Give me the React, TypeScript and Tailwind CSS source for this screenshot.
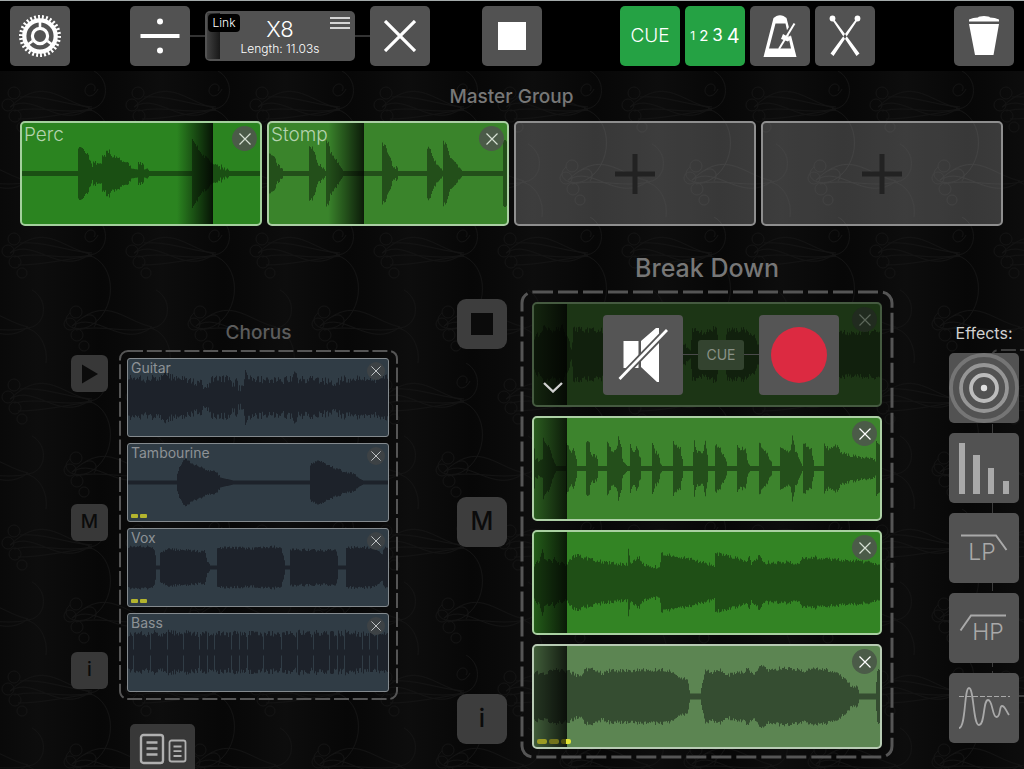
import type { ReactNode } from "react";

type Point = [number, number];

const FLAT = 2.5;

/** Turns envelope points into a mirrored, slightly ragged wave outline. */
function wavePath(points: Point[], width: number, noise: number): string {
  let seed = 7 + width;
  const random = () => {
    seed = (seed * 16807) % 2147483647;
    return seed / 2147483647;
  };
  const tops: string[] = [];
  const bottoms: string[] = [];
  let i = 0;
  for (let x = 0; x < width; x += 1) {
    while (i < points.length - 2 && points[i + 1][0] <= x) i += 1;
    const [x0, y0] = points[i];
    const [x1, y1] = points[i + 1];
    const t = x1 === x0 ? 1 : Math.min(1, Math.max(0, (x - x0) / (x1 - x0)));
    const base = y0 + (y1 - y0) * t;
    const wobble = base > 6 ? (random() - 0.5) * noise : 0;
    const amp = Math.max(1.5, base + wobble);
    tops.push(`L${x} ${(-amp).toFixed(1)}L${x + 1} ${(-amp).toFixed(1)}`);
    bottoms.unshift(`L${x + 1} ${amp.toFixed(1)}L${x} ${amp.toFixed(1)}`);
  }
  return `M0 0${tops.join("")}${bottoms.join("")}Z`;
}

const percWave: Point[] = [[0, FLAT], [55, FLAT], [56, 27], [58, 28], [66, 17], [70, 8], [71, 11], [73, 11], [74, 7], [75, 11], [78, 11], [79, 8], [80, 19], [83, 18], [84, 21], [87, 23], [89, 17], [98, 15], [100, 11], [108, 9], [109, 5], [115, 4], [116, 12], [121, 8], [122, 4], [125, 5], [127, FLAT], [169, FLAT], [170, 33], [175, 27], [181, 18], [188, 12], [191, 8], [197, 8], [198, 4], [199, 8], [201, 4], [202, 6], [203, 3], [205, 5], [207, FLAT], [238, FLAT]];
const stompWave: Point[] = [[0, 22], [6, 15], [8, 8], [13, 5], [14, FLAT], [39, FLAT], [40, 27], [43, 26], [46, 17], [49, 9], [54, 6], [56, FLAT], [57, 33], [59, 30], [61, 22], [66, 14], [73, 4], [74, FLAT], [112, FLAT], [113, 30], [116, 28], [118, 20], [121, 14], [124, 7], [128, 6], [129, FLAT], [157, FLAT], [158, 26], [161, 23], [163, 17], [166, 12], [171, 7], [173, 3], [174, 32], [177, 28], [180, 18], [184, 12], [191, 5], [193, FLAT], [233, FLAT], [234, 33], [238, 31]];
const guitarWave: Point[] = [[0, 22], [3, 20], [20, 18], [37, 22], [42, 20], [60, 17], [70, 15], [78, 11], [84, 19], [98, 19], [106, 13], [109, 20], [110, 10], [115, 9], [117, 25], [119, 20], [135, 18], [150, 17], [163, 18], [166, 23], [170, 18], [195, 17], [207, 13], [215, 20], [222, 17], [228, 20], [236, 20], [245, 17], [252, 22], [260, 20]];
const tambourineWave: Point[] = [[0, 2], [48, 2], [49, 10], [51, 15], [55, 22], [57, 24], [62, 20], [75, 14], [88, 10], [92, 5], [105, 2], [181, 2], [182, 18], [190, 22], [200, 17], [215, 11], [225, 9], [231, 4], [235, 2], [260, 2]];
const voxWave: Point[] = [[0, 21], [22, 21], [26, 17], [27, 12], [28, 2], [31, 2], [32, 16], [40, 18], [60, 17], [76, 16], [79, 7], [82, 2], [88, 2], [89, 20], [100, 20], [125, 19], [145, 21], [153, 19], [155, 12], [157, 2], [161, 2], [162, 18], [190, 17], [207, 17], [209, 13], [210, 2], [217, 2], [218, 20], [230, 20], [245, 20], [254, 14], [256, 20], [260, 21]];
const bassGaps = [5, 22, 39, 55, 71, 79, 86, 103, 111, 119, 135, 153, 169, 185, 201, 209, 216, 234, 241, 249];
const bassWave: Point[] = [
  [0, 19],
  ...bassGaps.flatMap((x): Point[] => [[x - 1, 18], [x, 3], [x + 1, 20]]),
  [260, 20],
];
const breakWave: Point[] = [[0, 18], [8, 22], [10, 30], [16, 22], [28, 28], [34, 14], [37, 5], [39, 25], [65, 24], [110, 25], [147, 18], [150, 10], [156, 4], [158, 25], [170, 22], [182, 27], [184, 10], [190, 5], [193, 24], [210, 25], [220, 18], [224, 8], [228, 22], [260, 23], [310, 22], [346, 22]];
const beatWave: Point[] = [[0, 22], [1, 9], [8, 8], [9, 29], [14, 22], [20, 6], [22, FLAT], [31, FLAT], [32, 26], [36, 17], [39, 19], [42, 10], [43, FLAT], [51, FLAT], [52, 28], [55, 25], [56, 15], [63, 11], [64, FLAT], [72, FLAT], [73, 25], [77, 18], [82, 18], [84, 31], [87, 20], [88, 8], [93, FLAT], [95, FLAT], [96, 25], [99, 16], [103, 22], [106, 10], [107, FLAT], [117, FLAT], [118, 25], [121, 17], [124, 14], [126, 5], [128, FLAT], [138, FLAT], [139, 26], [146, 20], [149, FLAT], [158, FLAT], [160, 29], [162, 17], [169, 17], [171, 29], [173, 12], [174, FLAT], [180, FLAT], [181, 24], [186, 19], [192, 8], [193, FLAT], [202, FLAT], [203, 24], [206, 20], [211, 20], [214, 5], [216, FLAT], [224, FLAT], [225, 25], [231, 18], [237, 7], [238, FLAT], [245, FLAT], [246, 22], [256, 17], [258, 33], [261, 18], [267, 5], [268, FLAT], [269, 26], [277, 19], [280, FLAT], [289, FLAT], [290, 25], [294, 19], [302, 23], [307, 15], [322, 12], [341, 9], [342, 26], [346, 22]];
const riffWave: Point[] = [[0, 18], [5, 22], [8, 32], [10, 24], [18, 20], [20, 26], [22, 20], [30, 19], [33, 17], [36, 24], [42, 27], [60, 22], [80, 19], [93, 18], [94, 33], [96, 20], [105, 25], [108, 18], [125, 15], [127, 29], [150, 25], [170, 20], [180, 16], [181, 29], [200, 25], [213, 21], [215, 26], [217, 18], [225, 27], [229, 20], [240, 20], [255, 20], [264, 18], [268, 25], [280, 25], [300, 23], [320, 22], [346, 18]];
const swellWave: Point[] = [[0, 25], [10, 22], [20, 27], [35, 25], [46, 19], [50, 27], [60, 27], [68, 23], [75, 26], [100, 26], [128, 27], [138, 25], [145, 20], [153, 17], [156, 3], [166, 3], [168, 12], [171, 27], [178, 24], [185, 27], [192, 21], [210, 25], [213, 28], [219, 22], [227, 31], [235, 26], [250, 29], [270, 25], [280, 29], [300, 25], [310, 18], [316, 11], [323, 10], [325, 3], [341, 3], [343, 27], [346, 29]];

function Waveform({ points, width, height, noise, className }: { points: Point[]; width: number; height: number; noise: number; className: string }) {
  return (
    <svg aria-hidden="true" viewBox={`0 ${-height / 2} ${width} ${height}`} preserveAspectRatio="none" className={`absolute inset-0 h-full w-full ${className}`}>
      <path d={wavePath(points, width, noise)} fill="currentColor" />
    </svg>
  );
}

function CloseIcon({ className }: { className: string }) {
  return (
    <svg aria-hidden="true" viewBox="0 0 12 12" className={className}>
      <path d="M0.5 0.5 11.5 11.5M11.5 0.5 0.5 11.5" stroke="currentColor" strokeWidth="1.2" fill="none" />
    </svg>
  );
}

function Backdrop() {
  return (
    <svg aria-hidden="true" className="absolute inset-0 h-full w-full">
      <defs>
        <linearGradient id="sheen" x1="0" x2="1">
          <stop offset="0" stopColor="#090909" />
          <stop offset="0.3" stopColor="#0d0d0d" />
          <stop offset="0.8" stopColor="#070707" />
          <stop offset="1" stopColor="#090909" />
        </linearGradient>
        <pattern id="damask" width="124" height="146" patternUnits="userSpaceOnUse">
          <rect width="124" height="146" fill="url(#sheen)" />
          <g fill="none" stroke="#131313" strokeWidth="1">
            <path d="M10 36C34 20 60 60 90 37C60 30 44 4 10 36Z" />
            <path d="M14 40C40 34 62 44 92 38M18 48C42 48 66 42 92 39M20 26C44 24 66 34 92 36" />
            <path d="M88 38C108 38 112 10 94 0M88 38C118 46 118 96 88 110C70 116 60 104 70 96" />
            <path d="M98 18C92 30 82 24 86 16C90 10 98 14 94 20M84 100C92 94 100 102 94 110" />
            <circle cx="14" cy="22" r="6" />
            <circle cx="8" cy="34" r="6" />
            <circle cx="15" cy="45" r="6" />
            <circle cx="22" cy="56" r="5" />
            <path d="M-52 109C-28 93-2 133 28 110C-2 103-18 77-52 109ZM72 109C96 93 122 133 152 110C122 103 106 77 72 109Z" />
            <path d="M76 113C102 107 124 117 154 111M-48 113C-22 107 0 117 30 111M26 111C46 111 50 83 32 73M26 111C40 114 48 130 46 146" />
            <circle cx="76" cy="95" r="6" />
            <circle cx="70" cy="107" r="6" />
            <circle cx="77" cy="118" r="6" />
            <circle cx="84" cy="129" r="5" />
          </g>
        </pattern>
      </defs>
      <rect width="100%" height="100%" fill="url(#damask)" />
    </svg>
  );
}

function Tile({ label, children, tone = "bg-[#525252]" }: { label: string; children: ReactNode; tone?: string }) {
  return (
    <button type="button" aria-label={label} className={`flex size-[60px] shrink-0 items-center justify-center rounded-[5px] text-white ${tone}`}>
      {children}
    </button>
  );
}

function GearIcon() {
  return (
    <svg aria-hidden="true" viewBox="-21 -21 42 42" className="size-[42px]" fill="none" stroke="currentColor">
      <circle r="18.5" strokeWidth="5" strokeDasharray="48 52" pathLength="3000" />
      <circle r="15.7" strokeWidth="4.2" />
      <circle r="7.6" strokeWidth="3.2" />
      <path d="M0-9V-15M7.5 5 12 8.5M-7.5 5-12 8.5" strokeWidth="2.6" />
    </svg>
  );
}

function Header() {
  return (
    <header className="flex h-[71px] items-center border-t border-[#a4aaaa] bg-black px-2.5">
      <Tile label="Settings"><GearIcon /></Tile>
      <div className="ml-15 flex items-center">
        <Tile label="Halve length">
          <svg aria-hidden="true" viewBox="0 0 40 40" className="size-10" fill="currentColor">
            <circle cx="20" cy="5.5" r="3" />
            <rect x="0.5" y="18" width="39" height="4" />
            <circle cx="20" cy="34.5" r="3" />
          </svg>
        </Tile>
        <span className="h-0.5 w-[15px] bg-[#333]" />
        <button type="button" className="relative flex h-[50px] w-[150px] flex-col items-center justify-center rounded-[5px] bg-[#525252] text-white">
          <span className="absolute inset-y-0.5 left-0.5 w-[13px] bg-linear-to-r from-[#404040] to-[#181818]" />
          <span className="absolute left-[3px] top-[3px] flex h-[18px] w-8 items-center justify-center rounded-[4px] bg-black text-[12px] font-light">Link</span>
          <span className="pt-0.5 text-[22px] leading-6 font-light">X8</span>
          <span className="text-[12px] leading-4 font-light">Length: 11.03s</span>
          <svg aria-hidden="true" viewBox="0 0 20 12" className="absolute right-[5px] top-1.5 h-3 w-5" stroke="currentColor" strokeWidth="1.6">
            <path d="M0 1H20M0 6H20M0 11H20" />
          </svg>
        </button>
        <span className="h-0.5 w-[15px] bg-[#333]" />
        <Tile label="Double length">
          <svg aria-hidden="true" viewBox="0 0 32 32" className="size-8" fill="none" stroke="currentColor" strokeWidth="3.2">
            <path d="M1 1 31 31M31 1 1 31" />
          </svg>
        </Tile>
      </div>
      <div className="ml-13">
        <Tile label="Stop all"><span className="size-7 bg-white" /></Tile>
      </div>
      <div className="mr-[79px] ml-auto flex gap-[5px]">
        <Tile label="Cue" tone="bg-[#25a244]"><span className="text-[19px] font-light">CUE</span></Tile>
        <Tile label="Count in" tone="bg-[#25a244]">
          <span className="flex items-center gap-1">
            <span className="text-[12px]">1</span>
            <span className="text-[15px]">2</span>
            <span className="text-[17px]">3</span>
            <span className="text-[20px]">4</span>
          </span>
        </Tile>
        <Tile label="Metronome">
          <svg aria-hidden="true" viewBox="0 0 34 44" className="h-11 w-[34px]" fill="currentColor">
            <path fillRule="evenodd" d="M10.500 4 13.500 2Q17 0.500 20.500 2L23.500 4 33.500 43H0.500ZM12.500 9.500 6 34.500H28L22.500 9.500Z" />
            <path d="M32 9 24.500 21" stroke="#525252" strokeWidth="6" />
            <path d="M31.500 9.500 16 35" stroke="currentColor" strokeWidth="2" />
            <path d="M20 20 28 24.500 25 27.500 18 25Z" />
          </svg>
        </Tile>
        <Tile label="Drum sticks">
          <svg aria-hidden="true" viewBox="0 0 34 44" className="h-11 w-[34px]" fill="currentColor">
            <path d="M4 5.500 5.500 4.500 31.500 39.500 28.500 42Z M30 5.500 28.500 4.500 2.500 39.500 5.500 42Z" />
            <circle cx="4.500" cy="4.500" r="2.900" />
            <circle cx="29.500" cy="4.500" r="2.900" />
          </svg>
        </Tile>
      </div>
      <Tile label="Trash">
        <svg aria-hidden="true" viewBox="0 0 30 40" className="h-10 w-[30px]" fill="currentColor">
          <path d="M0 3.500Q4 1.500 9 1.500Q10 0 15 0T21 1.500Q26 1.500 30 3.500V5.500H0ZM0 8H30L24.500 39H6Z" />
        </svg>
      </Tile>
    </header>
  );
}

function LoopCard({ name, points, tone, wave, fade, light = false, children }: { name?: string; points: Point[]; tone: string; wave: string; fade: string; light?: boolean; children?: ReactNode }) {
  return (
    <article className={`relative h-[105px] overflow-hidden rounded-[5px] border-2 ${tone}`}>
      <Waveform points={points} width={name ? 238 : 346} height={101} noise={4} className={wave} />
      {name && <h3 className="relative ml-0.5 pt-px text-[19px] leading-[22px] font-light text-[#b4d3ae]">{name}</h3>}
      <span className={`absolute inset-y-0 ${fade}`} />
      <button type="button" aria-label="Remove loop" className="absolute right-[3px] top-[3px] flex size-[25px] items-center justify-center rounded-full bg-[#4b5b48]">
        <CloseIcon className={`size-3 ${light ? "text-white" : "text-[#d5dfd2]"}`} />
      </button>
      {children}
    </article>
  );
}

function EmptySlot() {
  return (
    <button type="button" aria-label="Add loop" className="flex h-[105px] items-center justify-center rounded-[5px] border-2 border-[#8e8e8e] bg-white/20">
      <svg aria-hidden="true" viewBox="0 0 40 40" className="size-10" fill="#222">
        <path d="M17.500 0H22.500V17.500H40V22.500H22.500V40H17.500V22.500H0V17.500H17.500Z" />
      </svg>
    </button>
  );
}

function Dashes({ count }: { count: number }) {
  return (
    <span className="absolute bottom-[3px] left-[3px] flex gap-0.5">
      {Array.from({ length: count }, (_, i) => (
        <span key={i} className="h-1 w-[7px] rounded-[1px] bg-[#b3b42e]" />
      ))}
    </span>
  );
}

function TrackCard({ name, points, noise, marks = 0 }: { name: string; points: Point[]; noise: number; marks?: number }) {
  return (
    <article className="relative h-[79px] overflow-hidden rounded-[3px] border border-[#848a8e] bg-[#303c45]">
      <Waveform points={points} width={260} height={77} noise={noise} className="text-[#1d222a]" />
      <h3 className="relative ml-[3px] text-[14px] leading-[18px] text-[#8d9296]">{name}</h3>
      <button type="button" aria-label={`Remove ${name}`} className="absolute right-[3px] top-[3px] flex size-[18px] items-center justify-center rounded-full bg-[#3d4245]">
        <CloseIcon className="size-2.5 text-[#bfc2c4]" />
      </button>
      {marks > 0 && <Dashes count={marks} />}
    </article>
  );
}

function Outline({ radius, dash, stroke }: { radius: number; dash: string; stroke: number }) {
  return (
    <svg aria-hidden="true" className="absolute inset-px h-[calc(100%-2px)] w-[calc(100%-2px)] overflow-visible">
      <rect width="100%" height="100%" rx={radius} fill="none" stroke="#555" strokeWidth={stroke} strokeDasharray={dash} />
    </svg>
  );
}

function ChorusGroup() {
  const side = "flex size-[37px] items-center justify-center rounded-[6px] bg-[#383838] text-[19px] font-medium text-[#0b0b0b]";
  return (
    <section className="mt-[95px] grid grid-cols-[37px_279px] gap-x-[11px]">
      <h2 className="col-start-2 mb-[5px] text-center text-[19px] font-medium leading-6 text-[#5c5c5c]">Chorus</h2>
      <div className="col-start-1 flex flex-col justify-between pb-[11px] pt-[5px]">
        <button type="button" aria-label="Play" className={side}>
          <svg aria-hidden="true" viewBox="0 0 16 20" className="h-5 w-4" fill="currentColor"><path d="M0 0.500 16 10 0 19.500Z" /></svg>
        </button>
        <button type="button" className={side}>M</button>
        <button type="button" className={side}>i</button>
      </div>
      <div className="relative flex flex-col gap-1.5 py-2 pr-[9px] pl-2">
        <Outline radius={8} dash="15 3.800" stroke={2} />
        <TrackCard name="Guitar" points={guitarWave} noise={8} />
        <TrackCard name="Tambourine" points={tambourineWave} noise={2.5} marks={2} />
        <TrackCard name="Vox" points={voxWave} noise={3} marks={2} />
        <TrackCard name="Bass" points={bassWave} noise={6} />
      </div>
      <button type="button" aria-label="Switch page size" className="col-start-2 ml-[11px] mt-6 flex h-[45px] w-[65px] items-center justify-center rounded-t-[5px] bg-[#383838] text-[#b0b0b0]">
        <svg aria-hidden="true" viewBox="0 0 48 32" className="mt-1 h-8 w-12" fill="none" stroke="currentColor">
          <rect x="2" y="2" width="22" height="28" rx="2.500" strokeWidth="2.400" />
          <path d="M7.500 9.500H18.500M7.500 15.500H18.500M7.500 21.500H18.500" strokeWidth="2.600" />
          <rect x="30.500" y="7.500" width="16" height="21" rx="2" strokeWidth="1.800" />
          <path d="M34.500 13.500H42.500M34.500 18.200H42.500M34.500 23H42.500" strokeWidth="1.800" />
        </svg>
      </button>
    </section>
  );
}

function LoopControls() {
  return (
    <>
      <div className="absolute inset-y-0 left-[69px] flex items-center">
        <button type="button" aria-label="Mute" className="flex size-20 items-center justify-center rounded-[4px] bg-[#555] text-white">
          <svg aria-hidden="true" viewBox="0 0 50 56" className="h-14 w-[50px]" fill="currentColor">
            <path d="M5.500 14H20.500V41H5.500ZM23 14 38 1H41V55H39L23 40Z" />
            <path d="M1.500 52 49 3" stroke="#555" strokeWidth="6.500" />
            <path d="M1.500 52 49 3" stroke="currentColor" strokeWidth="2.800" />
          </svg>
        </button>
        <span className="h-px w-[15px] bg-[#4a4a4a]" />
        <button type="button" className="h-[30px] w-[46px] rounded-[3px] bg-[#33432f] text-[14px] text-[#899186]">CUE</button>
        <span className="h-px w-[15px] bg-[#4a4a4a]" />
        <button type="button" aria-label="Record" className="flex size-20 items-center justify-center rounded-[4px] bg-[#555]">
          <span className="size-14 rounded-full bg-[#dc2a41]" />
        </button>
      </div>
      <button type="button" aria-label="Collapse" className="absolute bottom-3 left-[9px] text-[#d0d0d0]">
        <svg aria-hidden="true" viewBox="0 0 20 11" className="h-[11px] w-5" fill="none" stroke="currentColor" strokeWidth="2.400"><path d="M1 1 10 9.500 19 1" /></svg>
      </button>
    </>
  );
}

function BreakDownGroup() {
  const side = "flex size-[50px] items-center justify-center rounded-[9px] bg-[#3d3d3d] text-[25px] font-medium text-[#0b0b0b]";
  const fade = "left-0 w-[33px] bg-linear-to-r from-black/30 to-black/80";
  return (
    <section className="ml-[59px] mt-[26px] grid grid-cols-[50px_372px] gap-x-3.5">
      <h2 className="col-start-2 mb-[7px] text-center text-[25px] font-medium leading-8 text-[#777]">Break Down</h2>
      <div className="col-start-1 flex flex-col justify-between pb-[14px] pt-2">
        <button type="button" aria-label="Stop" className={side}><span className="size-[22px] bg-[#0b0b0b]" /></button>
        <button type="button" className={side}>M</button>
        <button type="button" className={side}>i</button>
      </div>
      <div className="relative flex flex-col gap-[9px] px-[11px] pb-[9px] pt-[11px]">
        <Outline radius={11} dash="20 5" stroke={3} />
        <article className="relative h-[105px] overflow-hidden rounded-[5px] border-2 border-[#455a40] bg-[#1c3515]">
          <Waveform points={breakWave} width={346} height={101} noise={6} className="text-[#11200d]" />
          <span className={`absolute inset-y-0 ${fade}`} />
          <button type="button" aria-label="Remove loop" className="absolute right-[3px] top-[3px] flex size-[25px] items-center justify-center rounded-full bg-[#212b1f]">
            <CloseIcon className="size-3 text-[#5c665a]" />
          </button>
          <LoopControls />
        </article>
        <LoopCard points={beatWave} tone="border-[#aed0a6] bg-[#3d842d]" wave="text-[#244f1b]" fade={fade} light />
        <LoopCard points={riffWave} tone="border-[#a9d0a1] bg-[#338424]" wave="text-[#1f4f16]" fade={fade} />
        <LoopCard points={swellWave} tone="border-[#b8cbb4] bg-[#5c8552]" wave="text-[#354d31]" fade={fade} light>
          <span className="absolute bottom-[3px] left-[3px] flex gap-0.5">
            <span className="h-[5px] w-2.5 rounded-[2px] bg-[#9b9b24]" />
            <span className="h-[5px] w-2.5 rounded-[2px] bg-[#72731c]" />
            <span className="h-[5px] w-2.5 rounded-[2px] bg-linear-to-r from-[#50510f] from-50% to-[#e2e535] to-50%" />
          </span>
        </LoopCard>
      </div>
    </section>
  );
}

function EffectTile({ label, children }: { label: string; children: ReactNode }) {
  return (
    <button type="button" aria-label={label} className="relative size-[70px] overflow-hidden rounded-[5px] bg-[#525252] text-[#a9a9a9]">
      {children}
    </button>
  );
}

function FilterIcon({ d }: { d: string }) {
  return (
    <svg aria-hidden="true" viewBox="0 0 70 70" className="absolute inset-0 size-full" fill="none" stroke="currentColor" strokeWidth="2"><path d={d} /></svg>
  );
}

function Effects() {
  return (
    <aside className="relative ml-auto mt-[95px] w-[70px]">
      <h2 className="mb-2 text-center text-[16px] leading-6 whitespace-nowrap text-[#d0d0d0]">Effects:</h2>
      <svg aria-hidden="true" viewBox="0 0 32 350" className="absolute left-[43px] top-7 h-[350px] w-8" fill="none" stroke="#3c3c3c" strokeWidth="2">
        <path d="M0 350V8Q0 1 7 1H32" strokeDasharray="15 4" strokeDashoffset="6" />
        <path d="M24 347H32" />
      </svg>
      <div className="relative flex flex-col gap-2.5">
        <EffectTile label="Delay">
          <svg aria-hidden="true" viewBox="-35 -35 70 70" className="size-full" fill="none" strokeWidth="3.800">
            <circle r="33" stroke="#757575" />
            <circle r="23" stroke="#969696" />
            <circle r="13" stroke="#bcbcbc" />
            <circle r="3.200" fill="#e0e0e0" />
          </svg>
        </EffectTile>
        <EffectTile label="Reverb">
          <svg aria-hidden="true" viewBox="0 0 70 70" className="size-full" fill="currentColor">
            <path d="M10 10H16V61H10ZM24 22H31V61H24ZM39 35H45V61H39ZM54 48H60V61H54Z" />
          </svg>
        </EffectTile>
        <EffectTile label="Low pass">
          <FilterIcon d="M12 22.500H47L57.500 37" />
          <span className="relative block pr-1 pt-2 text-[23px] font-light">LP</span>
        </EffectTile>
        <EffectTile label="High pass">
          <FilterIcon d="M57 22.500H22L11.500 37.500" />
          <span className="relative block pl-2 pt-2 text-[23px] font-light">HP</span>
        </EffectTile>
        <EffectTile label="Compressor">
          <svg aria-hidden="true" viewBox="0 0 70 70" className="size-full" fill="none" stroke="currentColor">
            <path d="M10 23.500H61" strokeDasharray="5 2" />
            <path d="M10 55C17 55 15 15 20 15S24 52 30 52S34 27 39 27S43 44 47.500 44S50 33 53 33S57 38 60 42" strokeWidth="1.800" />
          </svg>
        </EffectTile>
      </div>
    </aside>
  );
}

export default function App() {
  return (
    <div className="min-h-screen overflow-hidden bg-black font-[Inter,'Liberation_Sans',sans-serif]">
      <Header />
      <main className="relative">
        <Backdrop />
        <section className="relative pl-5 pr-[21px] pt-3.5">
          <h1 className="mb-3 text-center text-[19px] font-medium leading-6 text-[#777]">Master Group</h1>
          <div className="grid grid-cols-4 gap-[5px]">
            <LoopCard name="Perc" points={percWave} tone="border-[#a4d09d] bg-[#2b8420]" wave="text-[#1a4f13]" fade="left-[155px] w-9 bg-linear-to-r from-transparent to-black/85" />
            <LoopCard name="Stomp" points={stompWave} tone="border-[#abcfa4] bg-[#3a842b]" wave="text-[#234f1a]" fade="left-[59px] w-9 bg-linear-to-r from-transparent to-black/80" />
            <EmptySlot />
            <EmptySlot />
          </div>
        </section>
        <div className="relative flex items-start pl-[71px] pr-[5px]">
          <ChorusGroup />
          <BreakDownGroup />
          <Effects />
        </div>
      </main>
    </div>
  );
}
